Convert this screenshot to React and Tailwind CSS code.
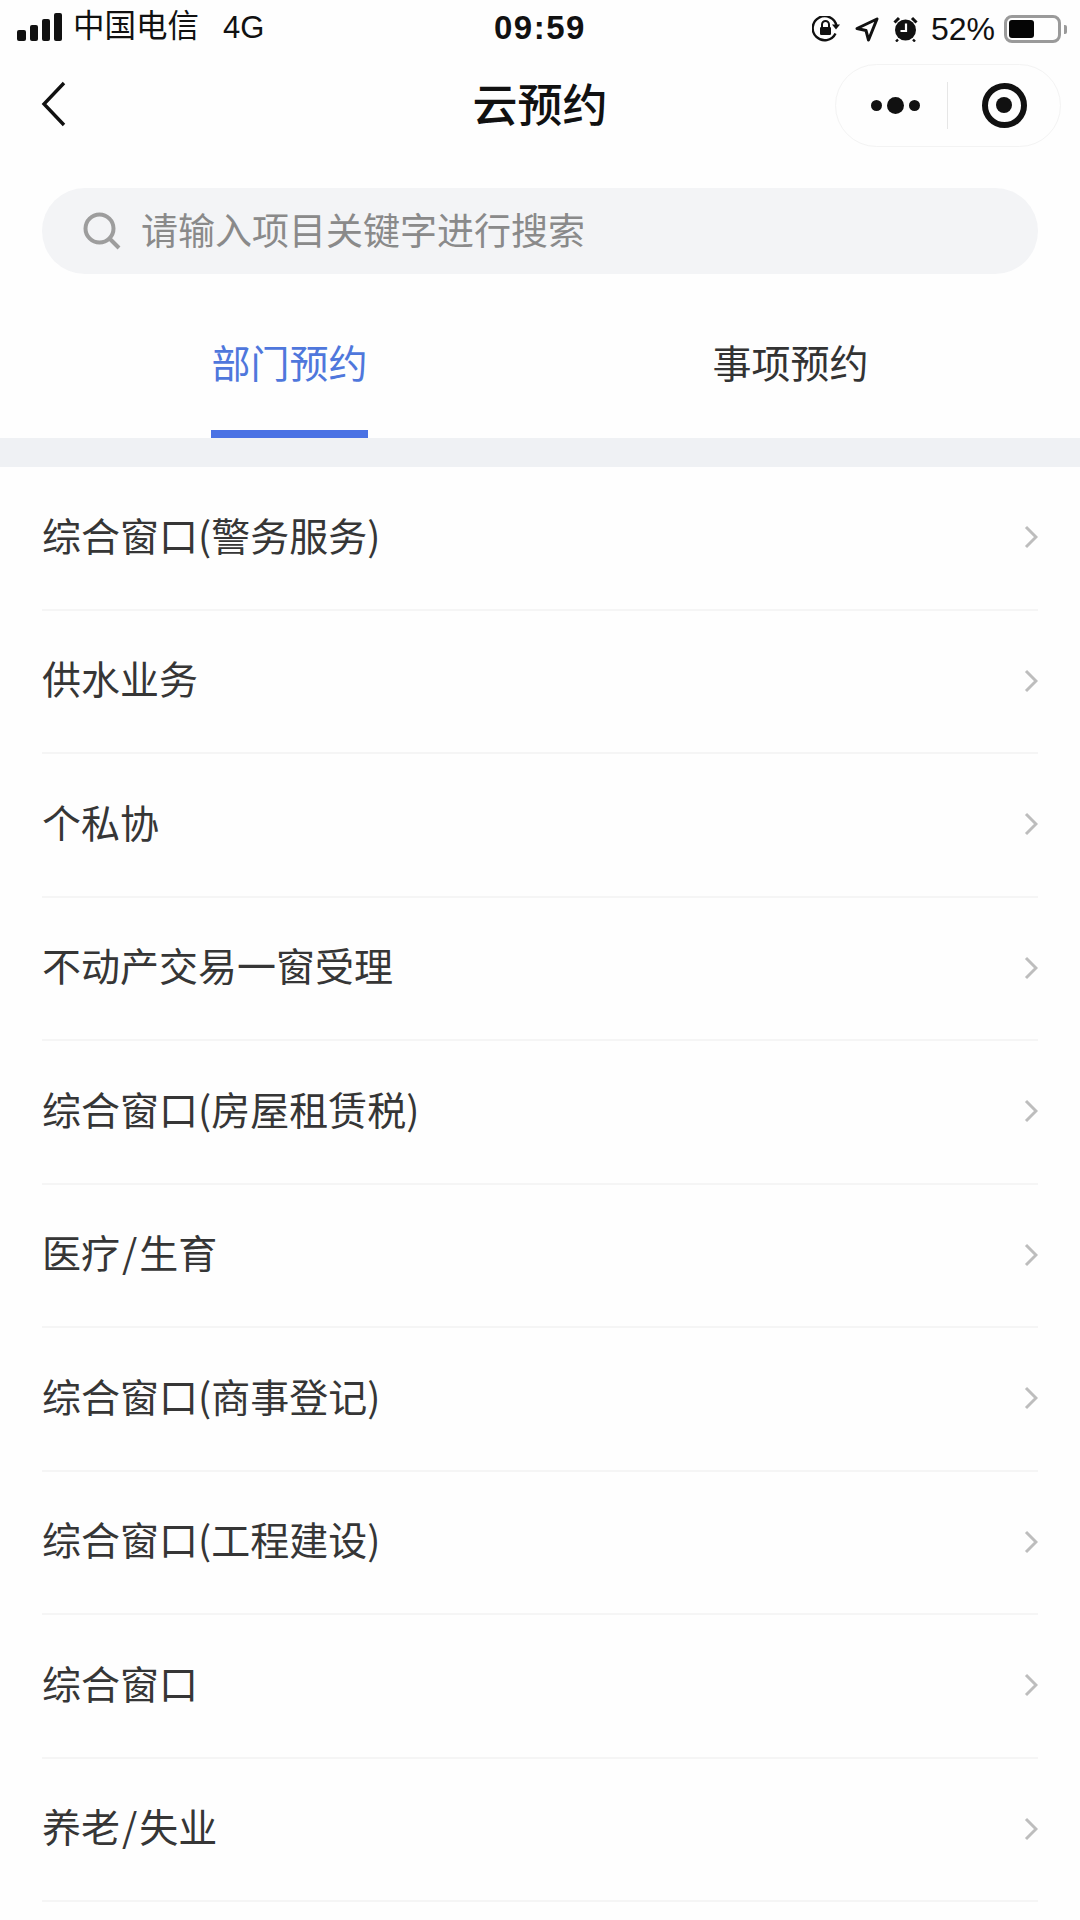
const ROWS = [
  '综合窗口(警务服务)',
  '供水业务',
  '个私协',
  '不动产交易一窗受理',
  '综合窗口(房屋租赁税)',
  '医疗/生育',
  '综合窗口(商事登记)',
  '综合窗口(工程建设)',
  '综合窗口',
  '养老/失业',
];

const CJK = "font-['Noto_Sans_CJK_SC',sans-serif]";

function StatusBar() {
  return (
    <div className="relative h-[54px] flex items-center text-[#111] font-['Liberation_Sans','Noto_Sans_CJK_SC',sans-serif]">
      <div className="flex items-end gap-[4px] ml-[17px] h-[28px]">
        <div className="w-[9px] h-[11px] rounded-[2px] bg-[#111]" />
        <div className="w-[8px] h-[16px] rounded-[2px] bg-[#111]" />
        <div className="w-[8px] h-[22px] rounded-[2px] bg-[#111]" />
        <div className="w-[8px] h-[28px] rounded-[2px] bg-[#111]" />
      </div>
      <span className="ml-[11px] text-[31.5px] leading-none">中国电信</span>
      <span className="ml-[24px] text-[31px] leading-none">4G</span>
      <span className="absolute left-[494px] top-[13px] text-[33px] leading-[30px] font-bold tracking-[1.5px]">09:59</span>
      <div className="absolute left-[812px] top-[13px] flex items-center">
        <svg width="28" height="26" viewBox="0 0 28 26" fill="none">
          <path d="M23.5 17.5A12 12 0 1 1 24.5 10" stroke="#111" strokeWidth="2.4" />
          <path d="M20 8.5h8l-4 5z" fill="#111" />
          <rect x="8" y="11" width="11" height="8" rx="1.2" fill="#111" />
          <path d="M10 11V8.5a3.5 3.5 0 0 1 7 0V11" stroke="#111" strokeWidth="2" />
        </svg>
        <svg className="ml-[15px]" width="24" height="25" viewBox="0 0 24 25" fill="none">
          <path d="M22 2L2 11.5l9 2 2.5 9.5z" stroke="#111" strokeWidth="3" strokeLinejoin="round" />
        </svg>
        <svg className="ml-[14px]" width="25" height="26" viewBox="0 0 25 26" fill="none">
          <circle cx="12.5" cy="14" r="10.5" fill="#111" />
          <path d="M1.5 6.5L6 2M23.5 6.5L19 2" stroke="#111" strokeWidth="3" />
          <path d="M5 23.5l-2 2M20 23.5l2 2" stroke="#111" strokeWidth="2.4" />
          <path d="M13 7.5V15H7.5" stroke="#fff" strokeWidth="2.2" />
        </svg>
        <span className="ml-[13px] text-[32px] leading-none">52%</span>
        <div className="ml-[9px] w-[57px] h-[28px] rounded-[8px] border-[3px] border-[#9a9a9a] p-[2px] flex">
          <div className="w-[25px] h-full rounded-[3px] bg-[#050505]" />
        </div>
        <div className="ml-[3px] w-[3px] h-[9px] rounded-r-[2px] bg-[#9a9a9a]" />
      </div>
    </div>
  );
}

function NavBar() {
  return (
    <div className="grid grid-cols-[1fr_auto_1fr] items-center h-[84px] mt-[9px]">
      <svg className="ml-[41px] mb-[2px]" width="26" height="46" viewBox="0 0 26 46" fill="none">
        <path d="M23 2L3 23l20 21" stroke="#111" strokeWidth="3.4" />
      </svg>
      <span className={`text-[45px] leading-none font-medium text-[#111] mb-[5px] ${CJK}`}>云预约</span>
      <div className="justify-self-end mr-[19px] w-[226px] h-[83px] rounded-full border border-[#f3f3f3] flex items-center">
        <div className="w-[111px] flex items-center justify-center gap-[5px] pl-[7px]">
          <div className="w-[11px] h-[11px] rounded-full bg-[#111]" />
          <div className="w-[17px] h-[17px] rounded-full bg-[#111]" />
          <div className="w-[11px] h-[11px] rounded-full bg-[#111]" />
        </div>
        <div className="w-px h-[47px] bg-[#e6e6e6]" />
        <div className="flex-1 flex items-center justify-center">
          <div className="w-[45px] h-[45px] rounded-full border-[6px] border-[#111] flex items-center justify-center">
            <div className="w-[16px] h-[16px] rounded-full bg-[#111]" />
          </div>
        </div>
      </div>
    </div>
  );
}

function SearchBox() {
  return (
    <div className="mx-[42px] mt-[41px] h-[86px] rounded-full bg-[#f3f4f6] flex items-center pl-[41px]">
      <svg width="38" height="38" viewBox="0 0 38 38" fill="none">
        <circle cx="16.5" cy="16.5" r="14" stroke="#9d9d9d" strokeWidth="4" />
        <path d="M27 27l9 9" stroke="#9d9d9d" strokeWidth="4" />
      </svg>
      <span className={`ml-[20px] mb-[4px] text-[37px] leading-none text-[#8a8a8a] ${CJK}`}>请输入项目关键字进行搜索</span>
    </div>
  );
}

function Tabs() {
  return (
    <div className="grid grid-cols-2 px-[39px] h-[164px]">
      <div className="flex flex-col items-center justify-end">
        <span className={`text-[39px] leading-none text-[#4f77dc] mb-[49px] ${CJK}`}>部门预约</span>
        <div className="w-[157px] h-[8px] bg-[#4a72e4]" />
      </div>
      <div className="flex flex-col items-center justify-end">
        <span className={`text-[39px] leading-none text-[#333] mb-[49px] ${CJK}`}>事项预约</span>
        <div className="h-[8px]" />
      </div>
    </div>
  );
}

function Row({ label }) {
  const parts = label.split('/');
  return (
    <div className="mx-[42px] h-[143.5px] border-b-2 border-[#f5f5f5] flex items-center justify-between pb-[1px]">
      <span className={`text-[39px] leading-none text-[#363636] mb-[6px] ${CJK}`}>
        {parts[0]}
        {parts.length > 1 && <span className="mx-[2px]">/</span>}
        {parts[1]}
      </span>
      <svg width="14" height="24" viewBox="0 0 14 24" fill="none">
        <path d="M2 2l10 10L2 22" stroke="#bdbdbd" strokeWidth="3" />
      </svg>
    </div>
  );
}

export default function App() {
  return (
    <div className="w-[1080px] h-[1920px] overflow-hidden bg-[#fefefe]">
      <StatusBar />
      <NavBar />
      <SearchBox />
      <Tabs />
      <div className="h-[29px] bg-[#eff1f4]" />
      {ROWS.map((r) => (
        <Row key={r} label={r} />
      ))}
    </div>
  );
}
